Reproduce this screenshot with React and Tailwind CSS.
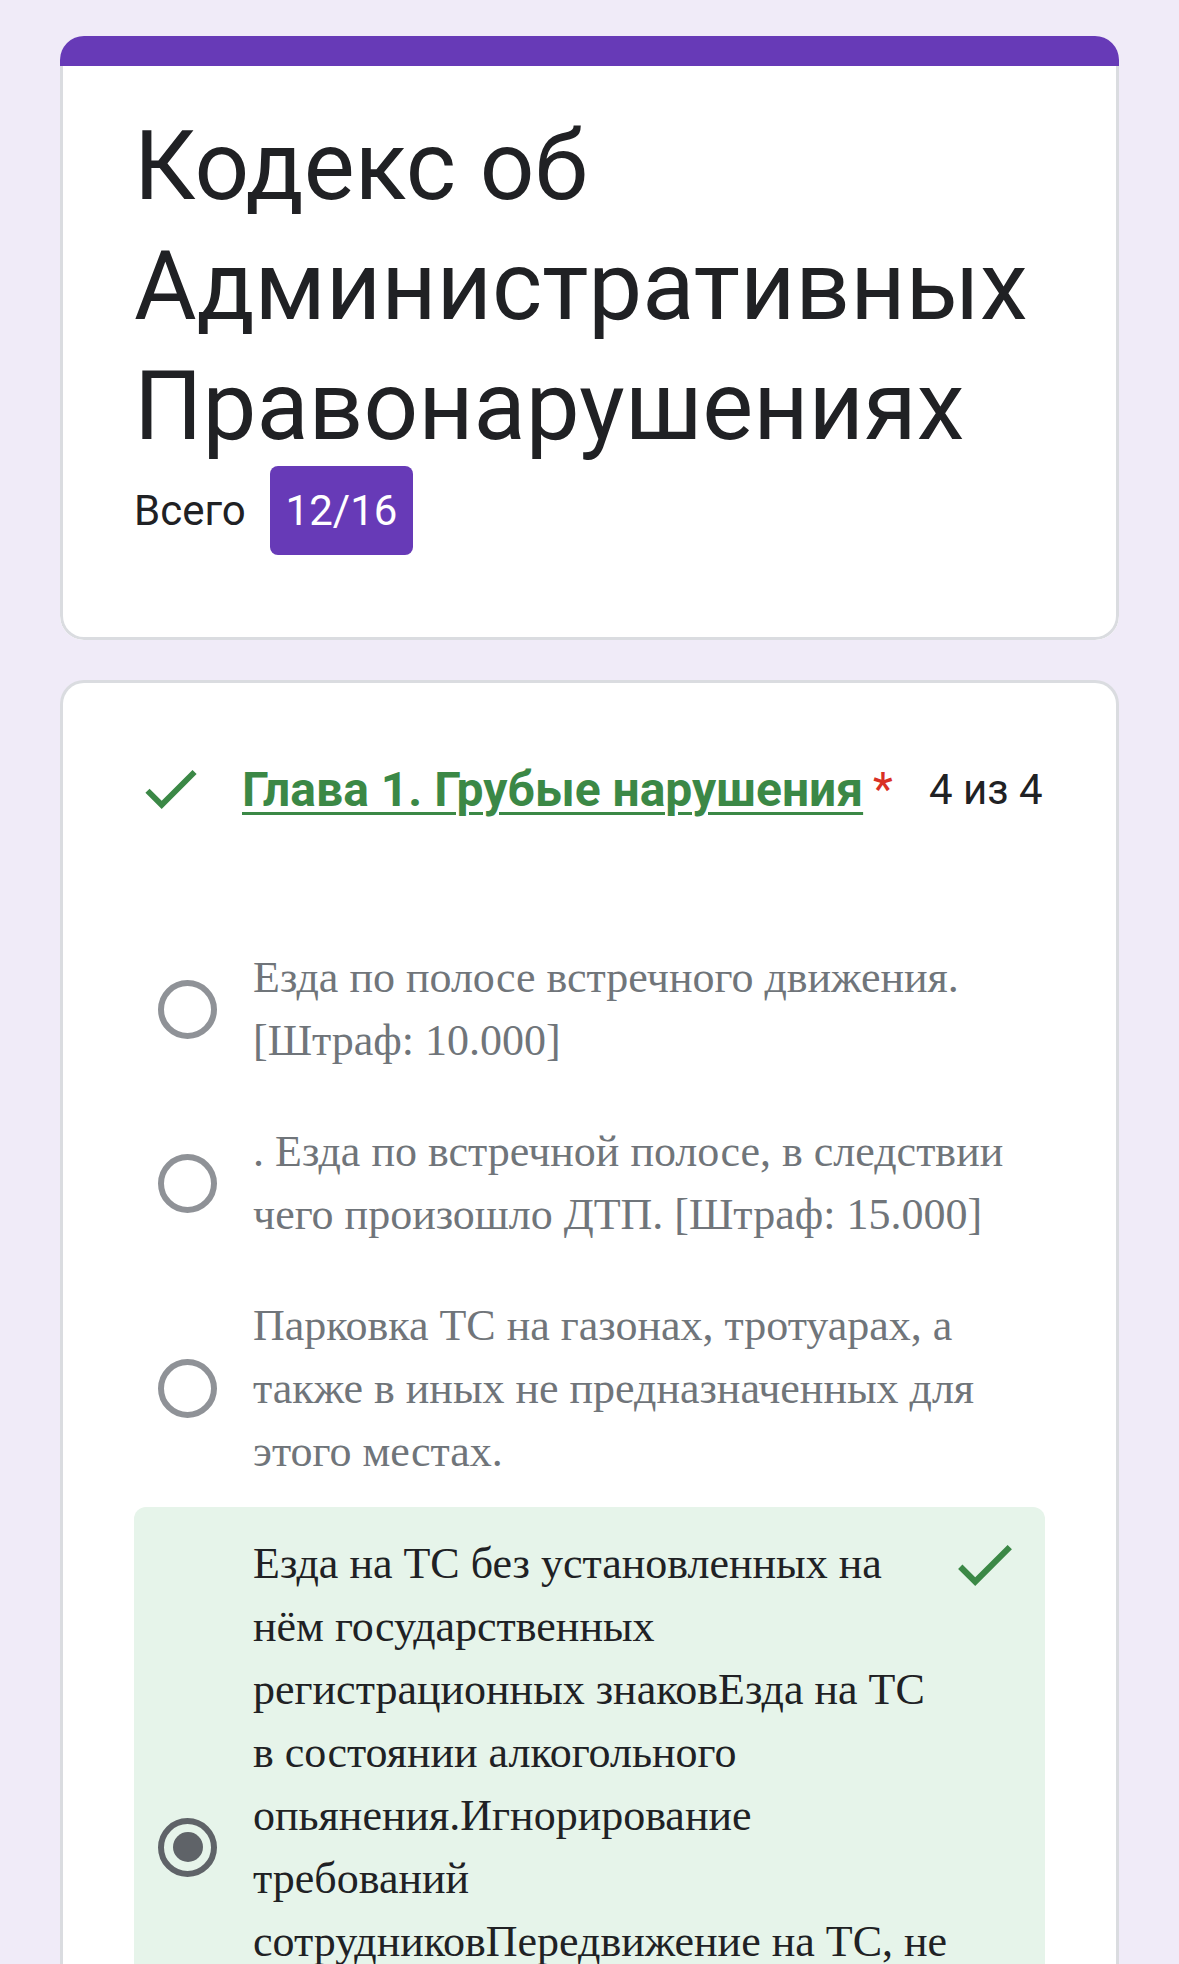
// Material "check" glyph, cropped to its strokes
const CheckMark = ({ className }) => (
  <svg viewBox="3.4 5.6 17.6 13.4" className={className} fill="currentColor">
    <path d="M9 16.17L4.83 12l-1.42 1.41L9 19 21 7l-1.41-1.41z" />
  </svg>
);

const Radio = ({ checked }) => (
  <div
    className={`flex h-[59px] w-[59px] shrink-0 items-center justify-center rounded-full border-[6px] ${
      checked ? 'border-[#5f6368]' : 'border-[#8f9297]'
    }`}
  >
    {checked && <div className="h-[30px] w-[30px] rounded-full bg-[#5f6368]" />}
  </div>
);

const options = [
  'Езда по полосе встречного движения. [Штраф: 10.000]',
  '. Езда по встречной полосе, в следствии чего произошло ДТП. [Штраф: 15.000]',
  'Парковка ТС на газонах, тротуарах, а также в иных не предназначенных для этого местах.',
];

const answer =
  'Езда на ТС без установленных на нём государственных регистрационных знаковЕзда на ТС в состоянии алкогольного опьянения.Игнорирование требований сотрудниковПередвижение на ТС, не зарегистрированном в установленном порядке. [Штраф: 20.000]';

export default function App() {
  return (
    <div className="min-h-[1964px] bg-[#f0ebf8] px-[60px] pt-[36px] font-['Roboto',sans-serif] text-[#202124]">
      {/* HEADER CARD */}
      <div className="overflow-hidden rounded-[24px] bg-white">
        <div className="h-[30px] bg-[#673ab7]" />
        <div className="rounded-b-[24px] border-x-[3px] border-b-[3px] border-[#dadce0] px-[71px] pt-[40px] pb-[82px]">
          <h1 className="text-[96px] leading-[120px] font-normal">
            Кодекс об Административных Правонарушениях
          </h1>
          <div className="flex items-center gap-6">
            <span className="text-[42px] leading-[49px]">Всего</span>
            <span className="flex h-[89px] items-center rounded-[8px] bg-[#673ab7] px-4 text-[42px] leading-[49px] text-white">
              12/16
            </span>
          </div>
        </div>
      </div>

      {/* QUESTION CARD */}
      <div className="mt-[40px] rounded-t-[24px] border-x-[3px] border-t-[3px] border-[#dadce0] bg-white px-[71px] pt-[71px] pb-[80px]">
        <div className="flex h-[71px] items-center">
          <CheckMark className="ml-[11px] h-[39px] w-[52px] text-[#3b8846]" />
          <span className="ml-[45px] text-[48px] leading-[71px] font-bold text-[#3b8846] underline decoration-[3px] underline-offset-[6px]">
            Глава 1. Грубые нарушения
          </span>
          <span className="ml-[10px] text-[46px] leading-[71px] text-[#d93025]">*</span>
          <span className="ml-[36px] text-[42px] leading-[71px]">4 из 4</span>
        </div>

        <div className="mt-[97px] font-['Liberation_Serif','Times_New_Roman',serif] text-[44px] leading-[63px]">
          {options.map((text) => (
            <div key={text} className="flex items-center gap-9 px-6 py-6">
              <Radio />
              <p className="text-[#70757a]">{text}</p>
            </div>
          ))}

          <div className="flex items-center gap-9 rounded-[12px] bg-[#e6f4ea] px-6 py-[25px]">
            <Radio checked />
            <p className="w-[698px] shrink-0 text-[#202124]">{answer}</p>
            <CheckMark className="mt-[13px] ml-[-29px] h-[41px] w-[54px] self-start text-[#3b8846]" />
          </div>
        </div>
      </div>
    </div>
  );
}
